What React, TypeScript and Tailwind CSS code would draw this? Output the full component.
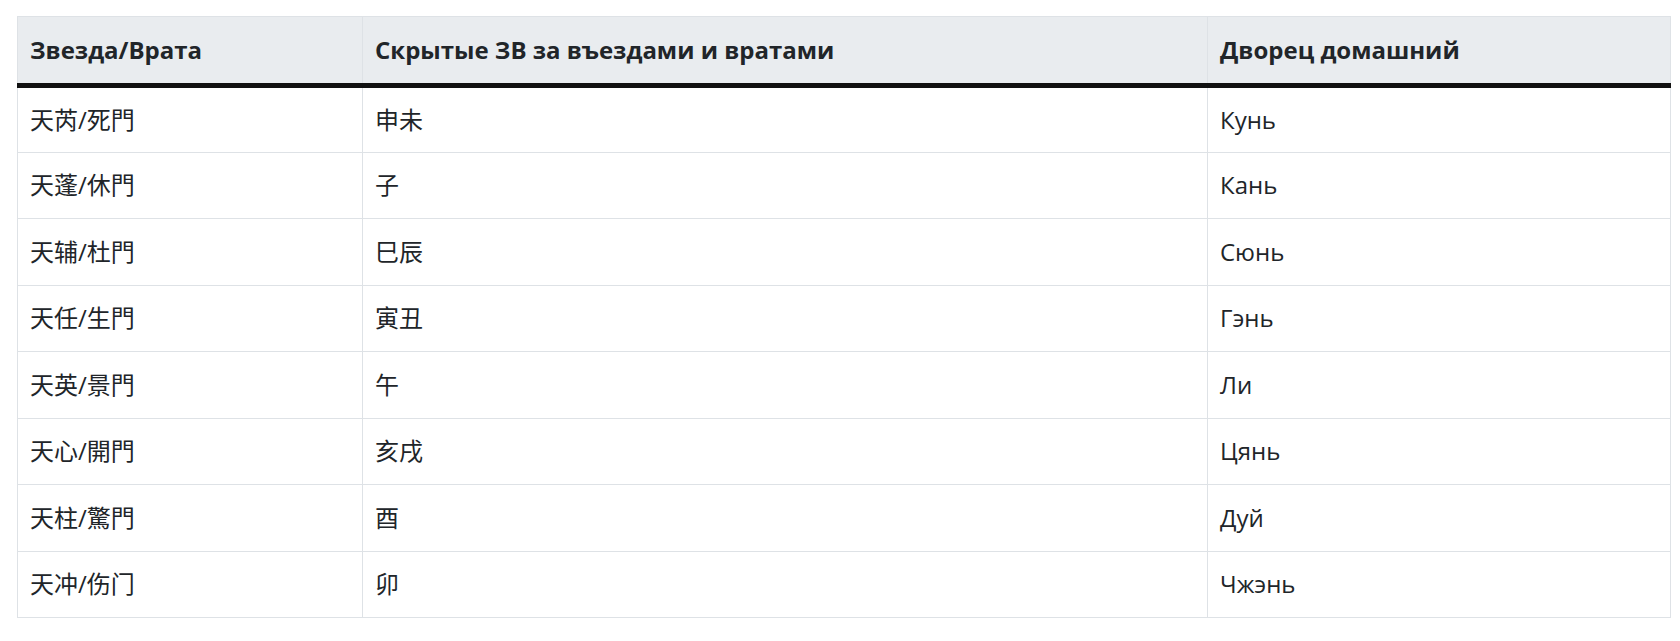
import React from "react";

const rows: [string, string, string][] = [
  ["天芮/死門", "申未", "Кунь"],
  ["天蓬/休門", "子", "Кань"],
  ["天辅/杜門", "巳辰", "Сюнь"],
  ["天任/生門", "寅丑", "Гэнь"],
  ["天英/景門", "午", "Ли"],
  ["天心/開門", "亥戌", "Цянь"],
  ["天柱/驚門", "酉", "Дуй"],
  ["天冲/伤门", "卯", "Чжэнь"],
];

export default function App() {
  return (
    <div
      className="w-[1680px] h-[641px] bg-white text-[#212529] pt-[16px] pl-[17px]"
      style={{ fontFamily: '"Open Sans", "Noto Sans CJK SC", sans-serif' }}
    >
      <table className="w-[1653px] border-collapse table-fixed text-[24px]">
        <colgroup>
          <col className="w-[345px]" />
          <col className="w-[845px]" />
          <col className="w-[463px]" />
        </colgroup>
        <thead>
          <tr className="bg-[#e9ecef]">
            {["Звезда/Врата", "Скрытые ЗВ за въездами и вратами", "Дворец домашний"].map((h) => (
              <th
                key={h}
                className="h-[69px] px-[12px] text-left font-bold border border-[#dee2e6] border-b-[5px] border-b-[#111] align-middle"
              >
                {h}
              </th>
            ))}
          </tr>
        </thead>
        <tbody>
          {rows.map((r, i) => (
            <tr key={i}>
              {r.map((c, j) => (
                <td key={j} className="h-[66.5px] px-[12px] border border-[#dee2e6] align-middle">
                  {c}
                </td>
              ))}
            </tr>
          ))}
        </tbody>
      </table>
    </div>
  );
}
